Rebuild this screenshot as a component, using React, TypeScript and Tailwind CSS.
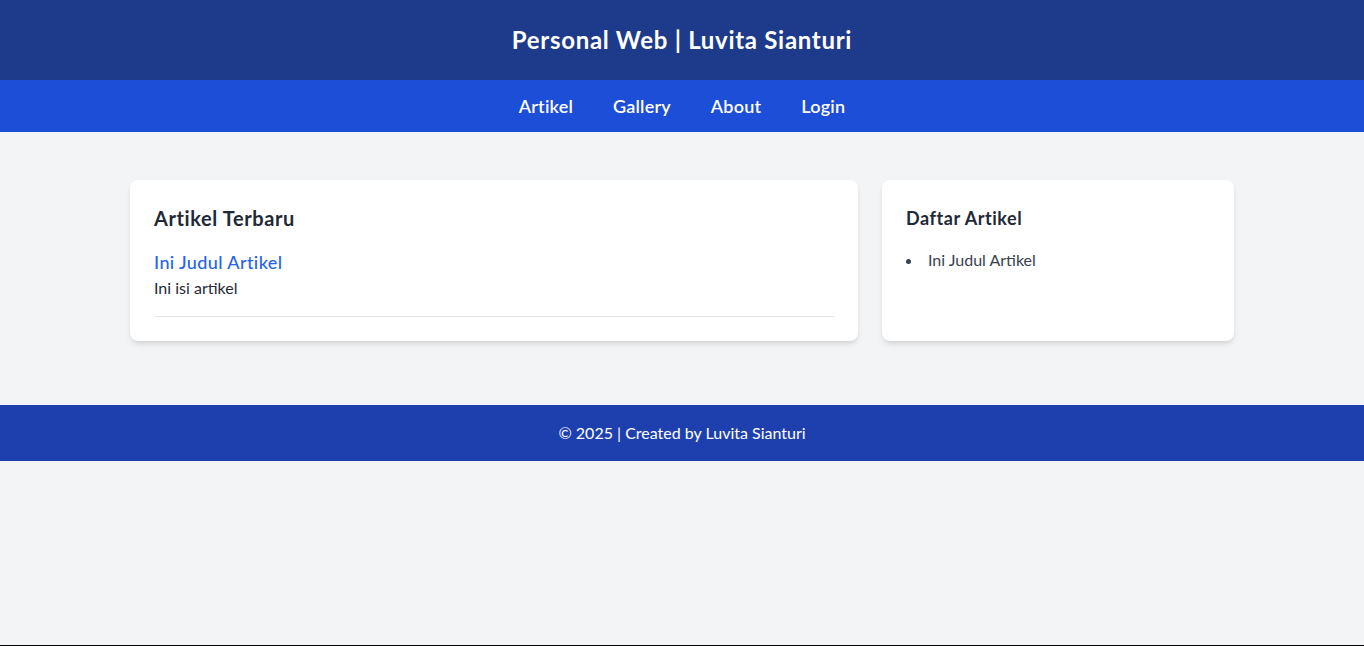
import React from "react";

const navItems = ["Artikel", "Gallery", "About", "Login"];

export default function App() {
  return (
    <div className="min-h-[646px] flex flex-col bg-[#f3f4f6] border-b border-black font-['Segoe_UI','Lato',sans-serif] text-[#111827]">
      <header className="bg-[#1e3a8a] py-6 text-center">
        <h1 className="text-2xl font-bold tracking-[0.7px] text-white">Personal Web | Luvita Sianturi</h1>
      </header>

      <nav className="bg-[#1d4ed8] py-3">
        <ul className="flex justify-center gap-10">
          {navItems.map((item) => (
            <li key={item}>
              <a href="#" className="text-lg font-semibold tracking-[0.2px] text-white">
                {item}
              </a>
            </li>
          ))}
        </ul>
      </nav>

      <main className="mx-auto w-full max-w-6xl px-6 pt-12 pb-16">
        <div className="grid grid-cols-3 gap-6">
          <section className="col-span-2 rounded-lg bg-white p-6 shadow-md">
            <h2 className="mb-4 text-xl font-bold tracking-[0.6px] text-[#1f2937]">Artikel Terbaru</h2>
            <article className="border-b border-[#e5e7eb] pb-4">
              <a href="#" className="text-lg font-medium tracking-[0.4px] text-[#2563eb]">
                Ini Judul Artikel
              </a>
              <p className="text-[#1f2937]">Ini isi artikel</p>
            </article>
          </section>

          <aside className="rounded-lg bg-white p-6 shadow-md">
            <h3 className="mb-4 text-lg font-bold tracking-[0.55px] text-[#1f2937]">Daftar Artikel</h3>
            <ul className="list-inside list-disc text-[#374151]">
              <li>
                <a href="#">Ini Judul Artikel</a>
              </li>
            </ul>
          </aside>
        </div>
      </main>

      <footer className="bg-[#1e40af] py-4 text-center text-white">
        © 2025 | Created by Luvita Sianturi
      </footer>
      <div className="flex-1" />
    </div>
  );
}
